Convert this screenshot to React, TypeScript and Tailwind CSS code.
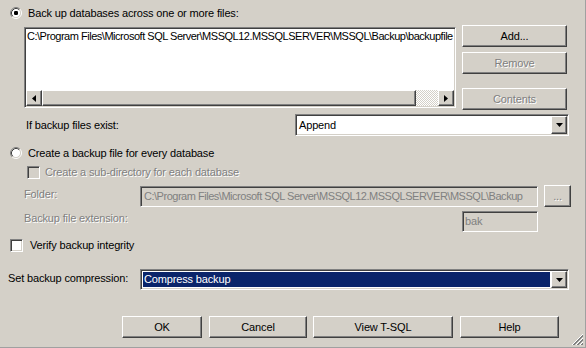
import React from "react";

const raised =
  "border border-t-white border-l-white border-r-[#404040] border-b-[#404040] shadow-[inset_-1px_-1px_0_#808080] bg-[#d4d0c8]";
const sunken =
  "border border-t-[#808080] border-l-[#808080] border-r-white border-b-white shadow-[inset_1px_1px_0_#404040,inset_-1px_-1px_0_#d4d0c8]";
const disabledText = "text-[#808080] [text-shadow:1px_1px_0_#ffffff]";

function Radio({ checked }: { checked?: boolean }) {
  return (
    <svg width="12" height="12" viewBox="0 0 12 12" className="shrink-0">
      <circle cx="6" cy="6" r="4.5" fill="#fff" />
      <path d="M2.11 9.89 A5.5 5.5 0 0 1 9.89 2.11" stroke="#808080" fill="none" />
      <path d="M9.89 2.11 A5.5 5.5 0 0 1 2.11 9.89" stroke="#ffffff" fill="none" />
      <path d="M2.82 9.18 A4.5 4.5 0 0 1 9.18 2.82" stroke="#404040" fill="none" />
      <path d="M9.18 2.82 A4.5 4.5 0 0 1 2.82 9.18" stroke="#d4d0c8" fill="none" />
      {checked && <rect x="4" y="4" width="4" height="4" rx="1.3" fill="#000" />}
    </svg>
  );
}

function Checkbox({ disabled }: { disabled?: boolean }) {
  return (
    <div
      className={`w-[13px] h-[13px] shrink-0 ${sunken} ${
        disabled ? "bg-[#d4d0c8]" : "bg-white"
      }`}
    />
  );
}

function Arrow({ dir }: { dir: "left" | "right" | "down" }) {
  if (dir === "down")
    return (
      <svg width="7" height="4" viewBox="0 0 7 4">
        <path d="M0 0h7L3.5 4z" fill="#000" />
      </svg>
    );
  return (
    <svg width="4" height="7" viewBox="0 0 4 7">
      {dir === "left" ? (
        <path d="M4 0v7L0 3.5z" fill="#000" />
      ) : (
        <path d="M0 0v7L4 3.5z" fill="#000" />
      )}
    </svg>
  );
}

function Btn({
  label,
  w,
  disabled,
  className = "",
}: {
  label: string;
  w: string;
  disabled?: boolean;
  className?: string;
}) {
  return (
    <div
      className={`${raised} ${w} h-[22px] flex items-center justify-center shrink-0 ${
        disabled ? disabledText : "text-black"
      } ${className}`}
    >
      {label}
    </div>
  );
}

export default function App() {
  return (
    <div className="w-[586px] h-[348px] bg-[#d4d0c8] relative overflow-hidden flex flex-col text-[11px] leading-[13px] tracking-[-0.15px] text-black font-['Liberation_Sans',Arial,sans-serif] border-r border-b border-r-[#a0a0a0] border-b-[#a0a0a0]">
      {/* Radio 1 */}
      <div className="mt-[7px] ml-[10px] h-[12px] flex items-center gap-[6px]">
        <Radio checked />
        <span>Back up databases across one or more files:</span>
      </div>

      {/* List + buttons */}
      <div className="mt-[6px] h-[85px] flex shrink-0">
        <div
          className={`ml-[24px] mt-[2px] w-[432px] h-[81px] bg-white ${sunken} p-[1px] flex flex-col`}
        >
          <div className="flex-1 overflow-hidden whitespace-nowrap pl-[1px] pt-[1px] tracking-[-0.48px]">
            C:\Program Files\Microsoft SQL Server\MSSQL12.MSSQLSERVER\MSSQL\Backup\backupfile
          </div>
          <div className="h-[16px] flex shrink-0">
            <div className={`${raised} w-[16px] h-[16px] flex items-center justify-center`}>
              <Arrow dir="left" />
            </div>
            <div className={`${raised} w-[374px] h-[16px]`} />
            <div className="flex-1 h-[16px] bg-[repeating-conic-gradient(#ffffff_0%_25%,#d4d0c8_0%_50%)] bg-[length:2px_2px]" />
            <div className={`${raised} w-[16px] h-[16px] flex items-center justify-center`}>
              <Arrow dir="right" />
            </div>
          </div>
        </div>
        <div className="ml-[6px] flex flex-col w-[105px]">
          <Btn label="Add..." w="w-[105px]" />
          <Btn label="Remove" w="w-[105px]" disabled className="mt-[5px]" />
          <Btn label="Contents" w="w-[105px]" disabled className="mt-[14px]" />
        </div>
      </div>

      {/* If backup files exist */}
      <div className="mt-[4px] h-[22px] flex items-center shrink-0">
        <span className="ml-[26px] w-[269px]">If backup files exist:</span>
        <div className={`w-[274px] h-[22px] bg-white ${sunken} p-[1px] flex`}>
          <div className="flex-1 flex items-center pl-[2px]">Append</div>
          <div className={`${raised} w-[16px] h-full flex items-center justify-center`}>
            <Arrow dir="down" />
          </div>
        </div>
      </div>

      {/* Radio 2 */}
      <div className="mt-[11px] ml-[10px] h-[12px] flex items-center gap-[6px]">
        <Radio />
        <span>Create a backup file for every database</span>
      </div>

      {/* Sub-directory checkbox */}
      <div className="mt-[7px] ml-[27px] h-[13px] flex items-center gap-[5px]">
        <Checkbox disabled />
        <span className={disabledText}>Create a sub-directory for each database</span>
      </div>

      {/* Folder */}
      <div className="mt-[6px] h-[22px] flex items-start shrink-0">
        <span className={`ml-[24px] mt-[3px] w-[116px] ${disabledText}`}>Folder:</span>
        <div
          className={`mt-[1px] w-[398px] h-[21px] bg-[#d4d0c8] ${sunken} flex items-center pl-[3px] whitespace-nowrap overflow-hidden text-[#808080] tracking-[-0.48px]`}
        >
          C:\Program Files\Microsoft SQL Server\MSSQL12.MSSQLSERVER\MSSQL\Backup
        </div>
        <Btn label="..." w="w-[27px]" disabled className="ml-[6px]" />
      </div>

      {/* Extension */}
      <div className="mt-[4px] h-[21px] flex items-start shrink-0">
        <span className={`ml-[24px] mt-[1px] w-[438px] ${disabledText}`}>
          Backup file extension:
        </span>
        <div
          className={`w-[76px] h-[21px] bg-[#d4d0c8] ${sunken} flex items-center pl-[2px] text-[#808080]`}
        >
          bak
        </div>
      </div>

      {/* Verify */}
      <div className="mt-[7px] ml-[10px] h-[13px] flex items-center gap-[7px]">
        <Checkbox />
        <span>Verify backup integrity</span>
      </div>

      {/* Compression */}
      <div className="mt-[17px] h-[21px] flex items-start shrink-0">
        <span className="ml-[8px] mt-[3px] w-[132px]">Set backup compression:</span>
        <div className={`w-[429px] h-[21px] bg-white ${sunken} p-[1px] flex`}>
          <div className="flex-1 m-[1px] bg-[#0a246a] text-white flex items-center pl-[1px]">
            Compress backup
          </div>
          <div className={`${raised} w-[16px] h-full flex items-center justify-center`}>
            <Arrow dir="down" />
          </div>
        </div>
      </div>

      {/* Bottom buttons */}
      <div className="mt-[26px] h-[22px] flex shrink-0">
        <Btn label="OK" w="w-[80px]" className="ml-[122px]" />
        <Btn label="Cancel" w="w-[98px]" className="ml-[7px]" />
        <Btn label="View T-SQL" w="w-[140px]" className="ml-[6px]" />
        <Btn label="Help" w="w-[99px]" className="ml-[7px]" />
      </div>

      {/* Resize grip */}
      <svg
        width="13"
        height="13"
        viewBox="0 0 13 13"
        className="absolute right-[1px] bottom-[1px]"
      >
        <path d="M12 1L1 12" stroke="#ffffff" />
        <path d="M12 2L2 12M12 3L3 12" stroke="#808080" />
        <path d="M12 5L5 12" stroke="#ffffff" />
        <path d="M12 6L6 12M12 7L7 12" stroke="#808080" />
        <path d="M12 9L9 12" stroke="#ffffff" />
        <path d="M12 10L10 12M12 11L11 12" stroke="#808080" />
      </svg>
    </div>
  );
}
